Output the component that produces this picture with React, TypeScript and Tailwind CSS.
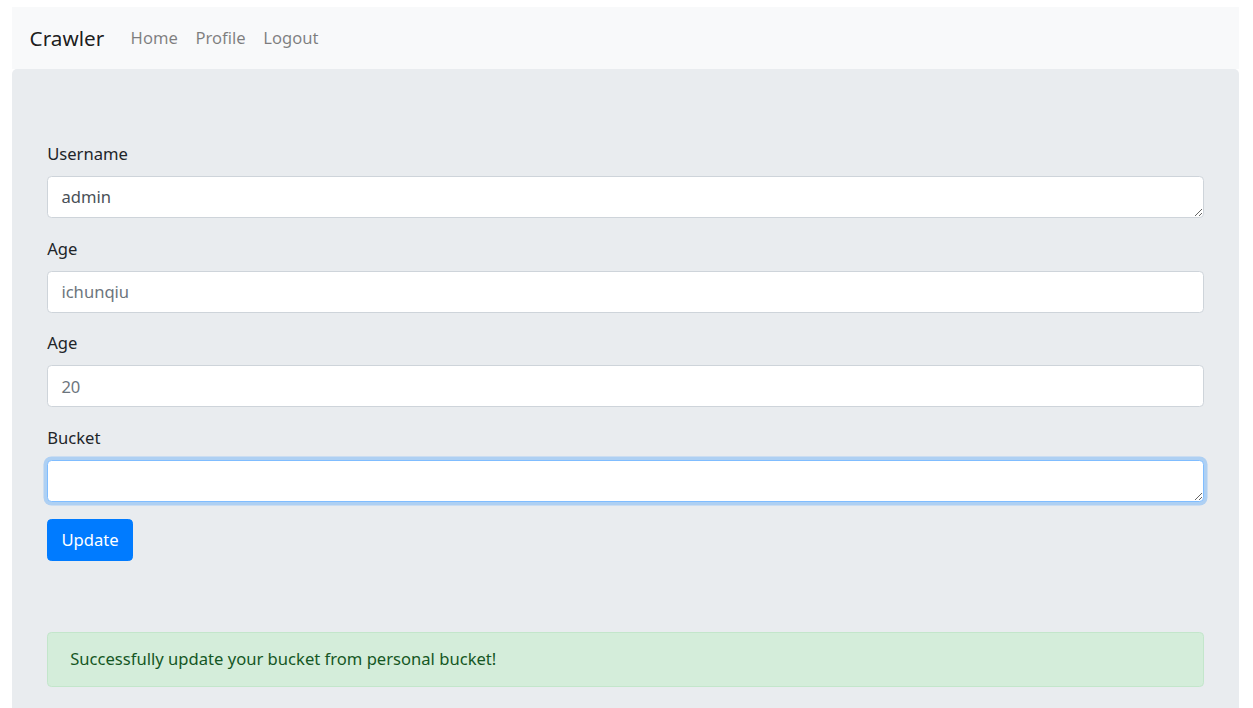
const fields = [
  { label: 'Username', value: 'admin', multi: true },
  { label: 'Age', value: 'ichunqiu', multi: false },
  { label: 'Age', value: '20', multi: false },
];

const App = () => {
  return (
    <div className="h-[708px] bg-white pt-[7px] pl-[12px] pr-[14px] overflow-hidden font-['Noto_Sans',sans-serif] text-[16.6px] leading-[26.4px] text-[#212529]">
      {/* Navbar */}
      <nav className="h-[62px] bg-[#f8f9fa] flex items-center px-[17.6px]">
        <span className="text-[20.7px] text-black/90 mr-[17.6px]">Crawler</span>
        <a className="px-[8.8px] text-black/50">Home</a>
        <a className="px-[8.8px] text-black/50">Profile</a>
        <a className="px-[8.8px] text-black/50">Logout</a>
      </nav>

      {/* Jumbotron */}
      <div className="bg-[#e9ecef] rounded-[5px] pt-[72px] px-[35.2px] pb-[70px]">
        <form>
          {fields.map((f, i) => (
            <div key={i} className="mb-[17.6px]">
              <label className="block mb-[8.8px]">{f.label}</label>
              {f.multi ? (
                <textarea
                  rows={1}
                  defaultValue={f.value}
                  className="block w-full h-[41.8px] min-h-[41.8px] bg-white border border-[#ced4da] rounded-[4.4px] px-[13.2px] py-[7px] text-[#495057] leading-[26.4px] outline-none"
                />
              ) : (
                <input
                  placeholder={f.value}
                  className="block w-full h-[41.8px] bg-white border border-[#ced4da] rounded-[4.4px] px-[13.2px] text-[#495057] placeholder:text-[#6c757d] outline-none"
                />
              )}
            </div>
          ))}
          <div className="mb-[17.6px]">
            <label className="block mb-[8.8px]">Bucket</label>
            <textarea
              rows={1}
              className="block w-full h-[41.8px] min-h-[41.8px] bg-white border border-[#80bdff] rounded-[4.4px] px-[13.2px] py-[6.6px] text-[#495057] outline-none shadow-[0_0_0_3.5px_rgba(0,123,255,0.25)]"
            />
          </div>
          <button
            type="button"
            className="h-[41.8px] px-[13.2px] bg-[#007bff] border border-[#007bff] text-white rounded-[4.4px]"
          >
            Update
          </button>
        </form>

        <div className="mt-[71px] bg-[#d4edda] border border-[#c3e6cb] text-[#155724] rounded-[4.4px] py-[13.2px] px-[22px]">
          Successfully update your bucket from personal bucket!
        </div>
      </div>
    </div>
  );
};

export default App;
